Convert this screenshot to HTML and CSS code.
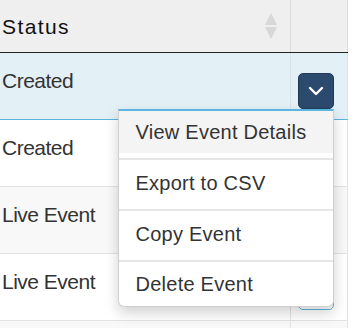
FILE: index.html
```html
<!DOCTYPE html>
<html lang="en">
<head>
    <meta charset="UTF-8">
    <title>Events</title>
    <link rel="stylesheet" href="styles.css">
</head>
<body>
    <table class="events">
        <thead>
            <tr>
                <th class="status-col">
                    Status
                    <span class="sort">
                        <span class="sort-up"></span>
                        <span class="sort-down"></span>
                    </span>
                </th>
                <th class="action-col"></th>
            </tr>
        </thead>
        <tbody>
            <tr class="selected">
                <td>Created</td>
                <td class="action-cell">
                    <div class="dropdown">
                        <button class="toggle open">
                            <svg width="16" height="10" viewBox="0 0 16 10"><path d="M2 2l6 6 6-6" fill="none" stroke="#fff" stroke-width="2.4" stroke-linecap="round" stroke-linejoin="round"/></svg>
                        </button>
                        <ul class="menu">
                            <li class="active"><a>View Event Details</a></li>
                            <li><a>Export to CSV</a></li>
                            <li><a>Copy Event</a></li>
                            <li><a>Delete Event</a></li>
                        </ul>
                    </div>
                </td>
            </tr>
            <tr>
                <td>Created</td>
                <td class="action-cell"><button class="toggle"></button></td>
            </tr>
            <tr class="striped">
                <td>Live Event</td>
                <td class="action-cell"><button class="toggle"></button></td>
            </tr>
            <tr>
                <td>Live Event</td>
                <td class="action-cell"><button class="toggle"></button></td>
            </tr>
            <tr class="striped">
                <td></td>
                <td class="action-cell"></td>
            </tr>
        </tbody>
    </table>
</body>
</html>
```

FILE: styles.css
```css
body {
    margin: 0;
    font-family: 'Liberation Sans', Arial, sans-serif;
    color: #333;
    background: #fff;
}
.events {
    border-collapse: collapse;
    width: 348px;
    table-layout: fixed;
}
.events th {
    height: 52px;
    padding: 15px 0 0 2px;
    box-sizing: border-box;
    vertical-align: top;
    text-align: left;
    font-weight: 400;
    font-size: 21px;
    line-height: 24px;
    letter-spacing: 1.4px;
    color: #111;
    background: #efefef;
    border-bottom: 1px solid #222;
    border-right: 1px solid #dcdcdc;
    position: relative;
}
.status-col {
    width: 290px;
}
.sort {
    position: absolute;
    left: 265px;
    top: 13px;
    display: flex;
    flex-direction: column;
    gap: 2px;
}
.sort-up, .sort-down {
    width: 0;
    height: 0;
    border-left: 6.5px solid transparent;
    border-right: 6.5px solid transparent;
}
.sort-up {
    border-bottom: 12px solid #d8d8d8;
}
.sort-down {
    border-top: 12px solid #d8d8d8;
}
.events td {
    height: 67px;
    padding: 16px 0 0 2px;
    box-sizing: border-box;
    vertical-align: top;
    font-size: 21px;
    line-height: 24px;
    letter-spacing: -0.5px;
    border-bottom: 1px solid #e3e3e3;
    border-right: 1px solid #e3e3e3;
}
.selected td {
    background: #e3f0f6;
    border-bottom: 1px solid #5ab6df;
    border-right-color: #d8e4ea;
}
.striped td {
    background: #f8f8f8;
}
.events td.action-cell {
    padding: 20px 0 0 7px;
}
.dropdown {
    position: relative;
    width: 36px;
}
.toggle {
    display: block;
    width: 36px;
    height: 36px;
    padding: 0;
    border: 1px solid #5ab6df;
    border-radius: 5px;
    background: #fff;
}
.toggle.open {
    background: #2c4a6e;
    border-color: #1f3a5a;
    display: flex;
    align-items: center;
    justify-content: center;
}
.menu {
    position: absolute;
    top: 36px;
    right: 0;
    width: 214px;
    margin: 0;
    padding: 0;
    list-style: none;
    background: #fff;
    border: 1px solid #cfcfcf;
    border-top: 2px solid #5ab6df;
    border-radius: 0 0 6px 6px;
    box-shadow: 0 6px 14px rgba(0, 0, 0, 0.18);
    z-index: 2;
    letter-spacing: 0.25px;
}
.menu li {
    border-bottom: 2px solid #e6e6e6;
}
.menu li:last-child {
    border-bottom: none;
}
.menu a {
    display: block;
    height: 49px;
    padding-left: 17px;
    font-size: 20px;
    line-height: 47px;
    color: #333;
}
.menu li:last-child a {
    height: 44px;
    line-height: 44px;
}
.menu li.active {
    padding-bottom: 5px;
}
.menu li.active a {
    height: 42px;
    line-height: 42px;
    background: #f4f4f4;
}
```
